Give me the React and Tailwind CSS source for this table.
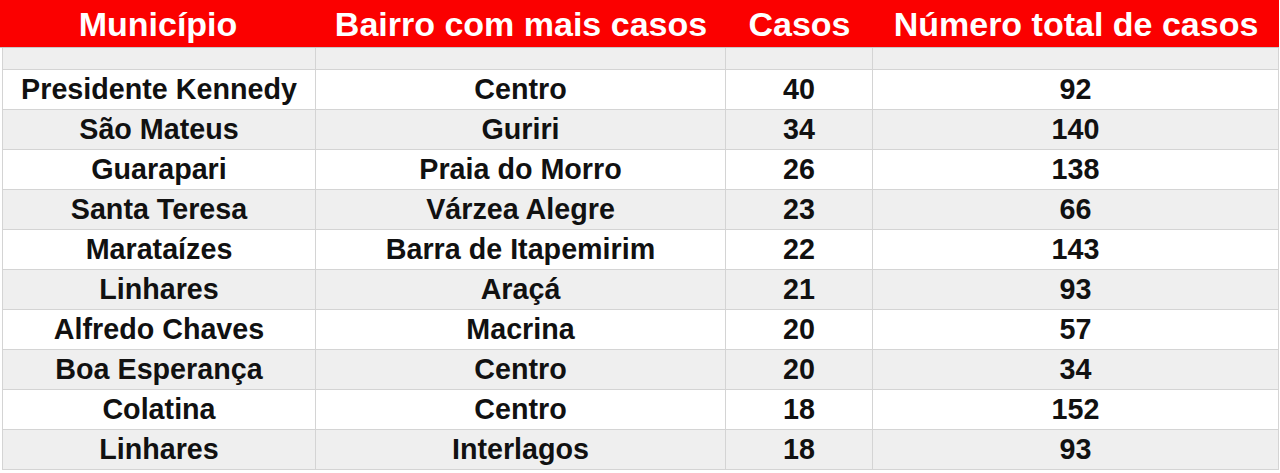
const rows = [
  ['Presidente Kennedy', 'Centro', '40', '92'],
  ['São Mateus', 'Guriri', '34', '140'],
  ['Guarapari', 'Praia do Morro', '26', '138'],
  ['Santa Teresa', 'Várzea Alegre', '23', '66'],
  ['Marataízes', 'Barra de Itapemirim', '22', '143'],
  ['Linhares', 'Araçá', '21', '93'],
  ['Alfredo Chaves', 'Macrina', '20', '57'],
  ['Boa Esperança', 'Centro', '20', '34'],
  ['Colatina', 'Centro', '18', '152'],
  ['Linhares', 'Interlagos', '18', '93'],
];

const cols = 'grid grid-cols-[316px_410px_147px_406px]';

export default function App() {
  return (
    <div className="w-[1280px] h-[473px] bg-white overflow-hidden font-['Liberation_Sans',Arial,sans-serif]">
      {/* Header */}
      <div className={`${cols} h-[48px] bg-[#fb0000] border-b border-[#c8c8c8] w-[1279px]`}>
        {['Município', 'Bairro com mais casos', 'Casos', 'Número total de casos'].map((h) => (
          <div key={h} className="flex items-center justify-center text-white font-bold text-[34px] leading-none pt-[1px]">
            {h}
          </div>
        ))}
      </div>

      {/* Empty spacer row */}
      <div className={`${cols} h-[22px] w-[1279px]`}>
        {[0, 1, 2, 3].map((i) => (
          <div key={i} className={`bg-[#efefef] border-b border-r border-[#d4d4d4] ${i === 0 ? 'ml-[2px] border-l' : ''}`} />
        ))}
      </div>

      {/* Data rows */}
      {rows.map((r, idx) => (
        <div key={idx} className={`${cols} h-[40px] w-[1279px]`}>
          {r.map((c, i) => (
            <div
              key={i}
              className={`flex items-center justify-center border-b border-r border-[#d4d4d4] text-[28.7px] font-bold text-[#111] leading-none ${idx % 2 === 0 ? 'bg-white' : 'bg-[#efefef]'} ${i === 0 ? 'ml-[2px] border-l' : ''}`}
            >
              {c}
            </div>
          ))}
        </div>
      ))}
    </div>
  );
}
